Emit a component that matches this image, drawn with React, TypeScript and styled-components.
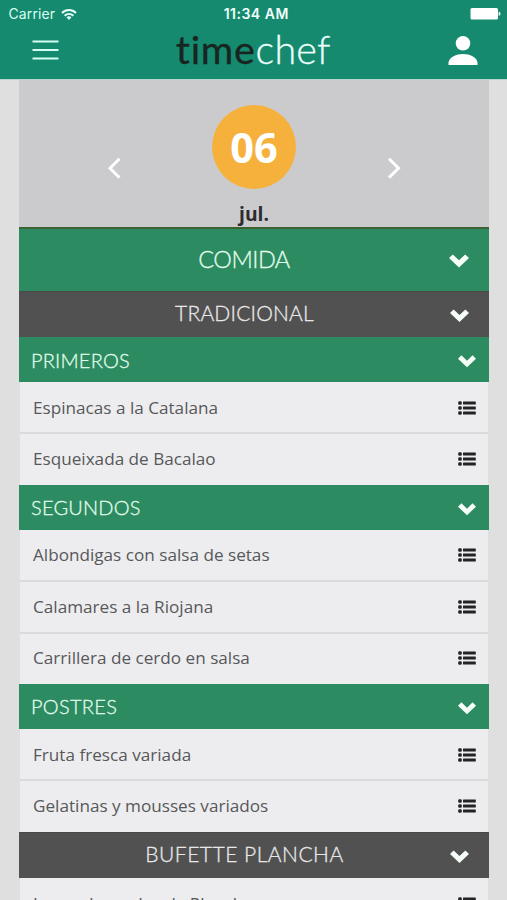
import React from "react";
import styled, { createGlobalStyle } from "styled-components";

const Global = createGlobalStyle`
  * { box-sizing: border-box; }
  html, body { margin: 0; background: #dfdfdf; }
  body { height: 900px; overflow: hidden; font-family: "Open Sans", "Noto Sans", sans-serif; }
`;

const Screen = styled.div`
  width: 507px;
  height: 900px;
  overflow: hidden;
  background: #dfdfdf;
`;

const Top = styled.header`
  height: 80px;
  background: #168a6f;
  border-bottom: 1px solid #b9d5cf;
`;

const StatusBar = styled.div`
  height: 28px;
  padding: 0 6px 0 8.5px;
  display: grid;
  grid-template-columns: 1fr auto 1fr;
  align-items: center;
  font: 400 14px/28px Inter, sans-serif;
  color: #d9fff4;
`;

const Carrier = styled.div`
  display: flex;
  align-items: center;
  gap: 6px;
  letter-spacing: 0.1px;
`;

const Clock = styled.div`
  font-weight: 600;
  font-size: 14px;
  letter-spacing: 0.5px;
  color: #f2fffb;
  padding-left: 3px;
`;

const BatterySlot = styled.div`
  display: flex;
  justify-content: flex-end;
`;

const NavBar = styled.div`
  height: 51px;
  padding: 0 29.5px 0 32px;
  display: flex;
  justify-content: space-between;
  align-items: flex-start;
`;

const MenuIcon = styled.svg`
  margin-top: 11px;
`;

const UserIcon = styled.svg`
  margin-top: 7px;
`;

const Logo = styled.div`
  display: flex;
  margin-top: -1px;
  font: 400 39.5px/44px Lato, sans-serif;
  color: #182521;
`;

const LogoDark = styled.span`
  letter-spacing: 0.7px;
  -webkit-text-stroke: 0.3px #182521;
`;

const LogoLight = styled.span`
  font-weight: 300;
  letter-spacing: 0.2px;
  color: #ecfffa;
  -webkit-text-stroke: 0.3px #ecfffa;
`;

const Page = styled.main`
  width: 470px;
  margin-left: 19px;
`;

const DatePanel = styled.section`
  height: 147px;
  padding: 0 88px;
  display: flex;
  justify-content: space-between;
  background: #cbcbcd;
`;

const DayColumn = styled.div`
  padding-top: 24.5px;
  display: flex;
  flex-direction: column;
  align-items: center;
`;

const Day = styled.div`
  width: 84px;
  height: 84px;
  border-radius: 50%;
  background: #f6b13d;
  color: #fff;
  font-size: 41.5px;
  font-weight: 700;
  line-height: 84px;
  text-align: center;
`;

const Month = styled.div`
  margin-top: 12px;
  font-size: 19.3px;
  font-weight: 700;
  line-height: 26px;
  color: #2c2c2e;
`;

const Arrow = styled.svg`
  margin-top: 77px;
`;

type Kind = "meal" | "menu" | "course";

const barHeight: Record<Kind, number> = { meal: 63.5, menu: 46.5, course: 45 };
const barFont: Record<Kind, number> = { meal: 23.5, menu: 21, course: 20 };

const Bar = styled.div<{ $kind: Kind }>`
  height: ${(p) => barHeight[p.$kind]}px;
  padding: ${(p) => (p.$kind === "course" ? "2px 13px 0 12px" : "0 20px 0 12px")};
  display: grid;
  grid-template-columns: ${(p) => (p.$kind === "course" ? "1fr auto" : "8px 1fr auto")};
  align-items: center;
  background: ${(p) => (p.$kind === "menu" ? "#515151" : "#2c8b60")};
  border-top: ${(p) => (p.$kind === "meal" ? "2.5px solid #3c6231" : p.$kind === "menu" ? "1px solid #474b48" : "none")};
  font-family: Lato, sans-serif;
  font-weight: 300;
  font-size: ${(p) => barFont[p.$kind]}px;
  line-height: 28px;
  color: ${(p) => (p.$kind === "menu" ? "#e8e8e8" : "#e2fdec")};
  -webkit-text-stroke: 0.3px currentColor;
`;

const BarTitle = styled.span<{ $center: boolean; $spacing: number }>`
  grid-column: ${(p) => (p.$center ? 2 : 1)};
  text-align: ${(p) => (p.$center ? "center" : "left")};
  letter-spacing: ${(p) => p.$spacing}px;
  padding-bottom: 2px;
`;

const Row = styled.div`
  height: 51.4px;
  margin: 0 1px;
  padding: 0 12px 0 13px;
  display: flex;
  justify-content: space-between;
  align-items: center;
  background: #ededef;
  color: #57585a;
  font-size: 17.15px;
  line-height: 24px;

  & + & {
    box-shadow: 0 -1px 0 #dadadc, inset 0 1px 0 #dadadc;
  }
`;

const Wifi = () => (
  <svg width="16" height="13" viewBox="0 0 16 13" fill="none" stroke="#e4fff8" strokeWidth="2">
    <path d="M1 5C5 1 11 1 15 5M3.6 7.7C6.2 5.3 9.8 5.3 12.4 7.7" />
    <path d="M5.5 9.3Q8 7.4 10.5 9.3L8 12Z" fill="#e4fff8" stroke="none" />
  </svg>
);

const Battery = () => (
  <svg width="31" height="12" viewBox="0 0 31 12" fill="#fff">
    <rect x="0.5" y="0" width="27.5" height="11.5" rx="1.5" />
    <path d="M28.7 3.8Q30.5 4 30.5 5.8Q30.5 7.6 28.7 7.8Z" />
  </svg>
);

const ChevronIcon = styled.svg`
  margin-top: 2px;
`;

const Chevron = ({ size }: { size: number }) => (
  <ChevronIcon width={size} height={size * 0.68} viewBox="0 0 20 13.6" fill="#f7fff9">
    <path d="M3.8.4 10 6.3 16.2.4 20 4.1 10 13.6 0 4.1Z" />
  </ChevronIcon>
);

const ListIcon = () => (
  <svg width="18" height="14" viewBox="0 0 18 14" fill="#232326">
    {[0.3, 5.3, 10.3].map((y) => (
      <React.Fragment key={y}>
        <rect x="0.2" y={y} width="3.6" height="3.5" rx="1.3" />
        <rect x="5" y={y + 0.3} width="12.8" height="2.9" rx="0.5" />
      </React.Fragment>
    ))}
  </svg>
);

interface BarItem { kind: Kind; title: string; spacing: number }
interface DishItem { dish: string }

const items: (BarItem | DishItem)[] = [
  { kind: "meal", title: "COMIDA", spacing: -0.5 },
  { kind: "menu", title: "TRADICIONAL", spacing: 0.2 },
  { kind: "course", title: "PRIMEROS", spacing: 0.2 },
  { dish: "Espinacas a la Catalana" },
  { dish: "Esqueixada de Bacalao" },
  { kind: "course", title: "SEGUNDOS", spacing: 0.2 },
  { dish: "Albondigas con salsa de setas" },
  { dish: "Calamares a la Riojana" },
  { dish: "Carrillera de cerdo en salsa" },
  { kind: "course", title: "POSTRES", spacing: 0.3 },
  { dish: "Fruta fresca variada" },
  { dish: "Gelatinas y mousses variados" },
  { kind: "menu", title: "BUFETTE PLANCHA", spacing: 0.5 },
  { dish: "Lomo de cerdo a la Plancha" },
];

export default function App() {
  return (
    <Screen>
      <Global />
      <Top>
        <StatusBar>
          <Carrier>Carrier<Wifi /></Carrier>
          <Clock>11:34 AM</Clock>
          <BatterySlot><Battery /></BatterySlot>
        </StatusBar>
        <NavBar>
          <MenuIcon width="27" height="22" viewBox="0 0 27 22" stroke="#d5fff3" strokeWidth="2">
            <path d="M.5 2.5h26M.5 11h26M.5 19.5h26" />
          </MenuIcon>
          <Logo><LogoDark>time</LogoDark><LogoLight>chef</LogoLight></Logo>
          <UserIcon width="30" height="30" viewBox="0 0 30 30" fill="#fff">
            <circle cx="15" cy="8.3" r="7.3" />
            <path d="M.5 30V27.5C1.5 22 8 19 15 19S28.5 22 29.5 27.5V30Z" />
          </UserIcon>
        </NavBar>
      </Top>
      <Page>
        <DatePanel>
          <Arrow width="14" height="22" viewBox="0 0 14 22" fill="none" stroke="#fff" strokeWidth="2.9">
            <path d="M12.5 1.8 3 11.2 12.5 20.6" />
          </Arrow>
          <DayColumn>
            <Day>06</Day>
            <Month>jul.</Month>
          </DayColumn>
          <Arrow width="14" height="22" viewBox="0 0 14 22" fill="none" stroke="#fff" strokeWidth="2.9">
            <path d="M2 1.8 11.5 11.2 2 20.6" />
          </Arrow>
        </DatePanel>
        {items.map((item) =>
          "kind" in item ? (
            <Bar key={item.title} $kind={item.kind}>
              <BarTitle $center={item.kind !== "course"} $spacing={item.spacing}>{item.title}</BarTitle>
              <Chevron size={item.kind === "meal" ? 20 : item.kind === "menu" ? 19 : 18} />
            </Bar>
          ) : (
            <Row key={item.dish}>
              <span>{item.dish}</span>
              <ListIcon />
            </Row>
          )
        )}
      </Page>
    </Screen>
  );
}
